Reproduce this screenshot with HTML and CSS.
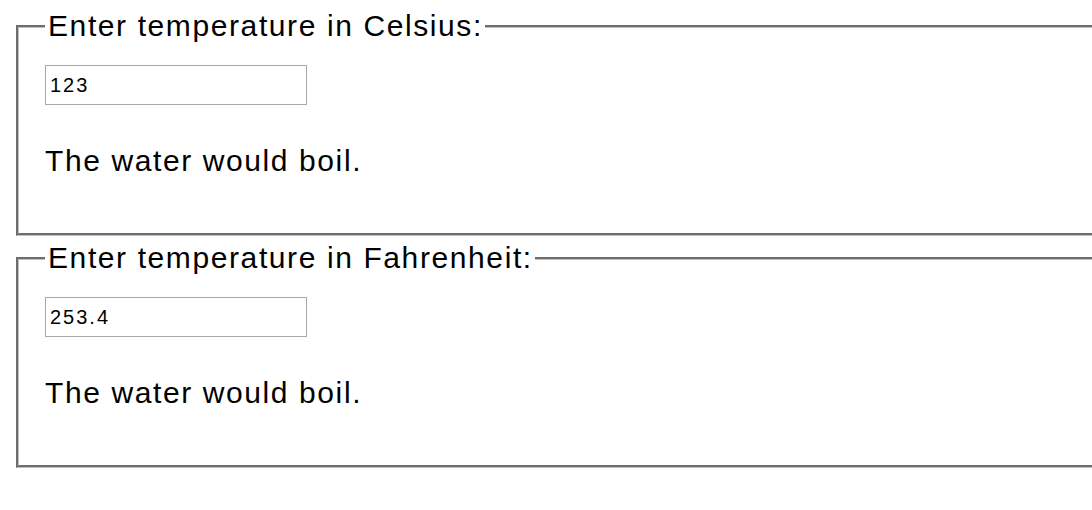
FILE: index.html
```html
<!DOCTYPE html>
<html lang="en">
<head>
<meta charset="utf-8">
<title>Temperature</title>
<link rel="stylesheet" href="styles.css">
</head>
<body>
<div class="page">
  <fieldset class="temp-box">
    <legend class="temp-legend">Enter temperature in Celsius:</legend>
    <input class="temp-input" type="text" value="123">
    <p class="verdict">The water would boil.</p>
  </fieldset>
  <fieldset class="temp-box">
    <legend class="temp-legend">Enter temperature in Fahrenheit:</legend>
    <input class="temp-input" type="text" value="253.4">
    <p class="verdict">The water would boil.</p>
  </fieldset>
</div>
</body>
</html>
```
FILE: styles.css
```css
html {
  overflow: hidden;
  background: #fff;
}
body {
  margin: 0;
  font-family: "Liberation Sans", Arial, sans-serif;
  color: #000;
}
.page {
  display: flex;
  flex-direction: column;
  gap: 6px;
  padding: 10px 0 0 16px;
}
.temp-box {
  margin: 0;
  width: 1200px;
  box-sizing: border-box;
  border: 3px groove #c0c0c0;
  padding: 23px 26px 30px 26px;
  min-width: 0;
}
.temp-legend {
  font-size: 30px;
  line-height: 32px;
  letter-spacing: 1.6px;
  padding: 0 2px 0 3px;
}
.temp-input {
  display: block;
  box-sizing: border-box;
  width: 262px;
  height: 40px;
  margin: 0;
  padding: 0 4px;
  border: 1px solid #a9a9a9;
  border-radius: 0;
  font-family: "Liberation Sans", Arial, sans-serif;
  font-size: 20px;
  letter-spacing: 2px;
  color: #000;
  background: #fff;
}
.verdict {
  margin: 39px 0 25px 0;
  font-size: 30px;
  line-height: 34px;
  letter-spacing: 1.6px;
}
```
